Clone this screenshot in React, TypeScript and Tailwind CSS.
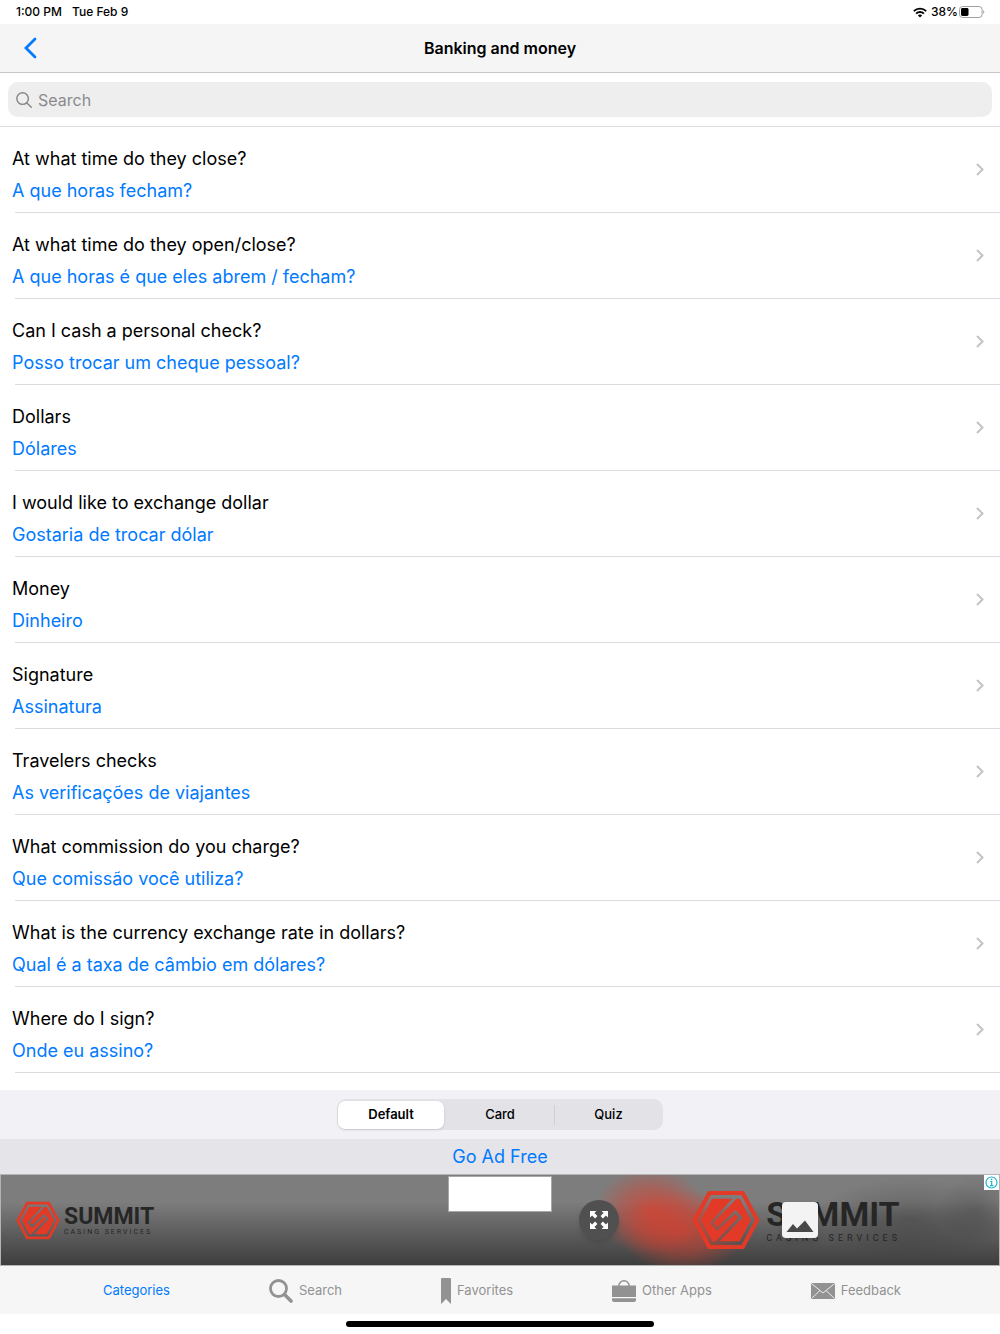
import React, { useId, useState } from 'react'

interface Phrase {
  source: string
  translation: string
}

const phrases: Phrase[] = [
  { source: 'At what time do they close?', translation: 'A que horas fecham?' },
  {
    source: 'At what time do they open/close?',
    translation: 'A que horas é que eles abrem / fecham?'
  },
  {
    source: 'Can I cash a personal check?',
    translation: 'Posso trocar um cheque pessoal?'
  },
  { source: 'Dollars', translation: 'Dólares' },
  {
    source: 'I would like to exchange dollar',
    translation: 'Gostaria de trocar dólar'
  },
  { source: 'Money', translation: 'Dinheiro' },
  { source: 'Signature', translation: 'Assinatura' },
  { source: 'Travelers checks', translation: 'As verificações de viajantes' },
  {
    source: 'What commission do you charge?',
    translation: 'Que comissão você utiliza?'
  },
  {
    source: 'What is the currency exchange rate in dollars?',
    translation: 'Qual é a taxa de câmbio em dólares?'
  },
  { source: 'Where do I sign?', translation: 'Onde eu assino?' }
]

const modes = ['Default', 'Card', 'Quiz']

const WifiIcon = () => (
  <svg viewBox="0 0 14 11" className="h-[11px] w-[14px]" aria-hidden="true">
    <g fill="none" stroke="#000" strokeWidth="1.8">
      <path d="M0.8 4.2a8.8 8.8 0 0 1 12.4 0" />
      <path d="M3.1 6.6a5.5 5.5 0 0 1 7.8 0" />
    </g>
    <path d="M7 10.6 4.9 8.5a3 3 0 0 1 4.2 0z" />
  </svg>
)

const BatteryIcon = () => (
  <svg viewBox="0 0 26 12" className="h-3 w-[26px]" aria-hidden="true">
    <rect
      x="0.5"
      y="0.5"
      width="22.6"
      height="11"
      rx="3"
      fill="none"
      stroke="#a0a0a0"
    />
    <rect x="2" y="2" width="7.5" height="8" rx="1.4" />
    <path d="M24.2 4.2v3.6c.7-.3 1.1-1 1.1-1.8s-.4-1.5-1.1-1.8z" fill="#a0a0a0" />
  </svg>
)

const StatusBar = () => (
  <div className="flex h-6 items-center justify-between pl-4 pr-[15px] text-xs font-medium">
    <div className="flex gap-[10px]">
      <span>1:00 PM</span>
      <span>Tue Feb 9</span>
    </div>
    <div className="flex items-center">
      <WifiIcon />
      <span className="ml-1 mr-px">38%</span>
      <BatteryIcon />
    </div>
  </div>
)

const NavBar = () => (
  <header className="grid h-[49px] grid-cols-[1fr_auto_1fr] items-center border-b border-[#c8c8ca] bg-[#f5f5f5]">
    <button type="button" aria-label="Back" className="ml-6 w-4">
      <svg viewBox="0 0 13 22" className="h-[22px] w-[13px]">
        <path
          d="M11 2 2 11l9 9"
          fill="none"
          stroke="#007aff"
          strokeWidth="2.8"
          strokeLinecap="round"
        />
      </svg>
    </button>
    <h1 className="text-base font-semibold">Banking and money</h1>
  </header>
)

const SearchField = () => (
  <div className="border-b border-[#dcdcde] px-2 py-[9px]">
    <label className="flex h-[35px] items-center gap-[6px] rounded-[10px] bg-[#eeeeee] px-2">
      <svg viewBox="0 0 16 16" className="size-4" aria-hidden="true">
        <g fill="none" stroke="#85858a" strokeWidth="1.4" strokeLinecap="round">
          <circle cx="6.6" cy="6.6" r="5.8" />
          <path d="m10.900 10.900 4.400 4.400" />
        </g>
      </svg>
      <input
        type="search"
        aria-label="Search"
        placeholder="Search"
        className="min-w-0 flex-1 bg-transparent text-base outline-none placeholder:text-[#8a8a8e]"
      />
    </label>
  </div>
)

const PhraseRow: React.FC<{ phrase: Phrase }> = ({ phrase }) => (
  <li>
    <button
      type="button"
      className="flex w-full items-center justify-between pl-3 pr-4 text-left"
    >
      <span className="flex flex-col pb-[5px] pt-4 text-lg leading-8">
        <span>{phrase.source}</span>
        <span className="text-[#007aff]">{phrase.translation}</span>
      </span>
      <svg viewBox="0 0 8 13" className="h-[13px] w-2" aria-hidden="true">
        <path d="m1 1 5.5 5.5L1 12" fill="none" stroke="#c4c4c7" strokeWidth="2" />
      </svg>
    </button>
    <div className="ml-[15px] h-px bg-[#dcdcde]" />
  </li>
)

const ModeSwitch = () => {
  const [mode, setMode] = useState('Default')

  return (
    <div className="flex h-[49px] items-center justify-center bg-[#f2f1f6]">
      <div className="grid h-[31px] w-[326px] grid-cols-3 rounded-[9px] bg-[#e3e2e7] px-px py-[2px] text-[13px]">
        {modes.map(item => (
          <button
            key={item}
            type="button"
            aria-pressed={item === mode}
            onClick={() => setMode(item)}
            className={
              item === mode
                ? 'mr-[2px] rounded-[7px] bg-white font-semibold shadow'
                : 'my-1 border-[#cfced4] font-medium last:border-l'
            }
          >
            {item}
          </button>
        ))}
      </div>
    </div>
  )
}

const SummitMark: React.FC<{ className: string }> = ({ className }) => {
  const maskId = useId()

  return (
    <svg viewBox="0 0 68 60" className={className} aria-hidden="true">
      <mask id={maskId}>
        <rect width="68" height="60" fill="#fff" />
        <path
          d="M46 5 19.500 33l5.500 6L43.500 22l5 5.500L22 55"
          fill="none"
          stroke="#000"
          strokeWidth="3"
        />
      </mask>
      <path
        d="M2.800 30 17.300 3h33.400l14.500 27-14.500 27H17.300z"
        fill="none"
        stroke="#e33a27"
        strokeWidth="4.200"
      />
      <path
        d="M9 30 20.200 8.800h27.600L59 30 47.800 51.200H20.200z"
        fill="#e33a27"
        mask={`url(#${maskId})`}
      />
    </svg>
  )
}

const AdBanner = () => (
  <section
    aria-label="Advertisement"
    className="relative flex h-[92px] items-center justify-between overflow-hidden border border-[#b4b4b4] bg-linear-to-b from-[#7d7d7d] from-30% to-[#3e3e3e] font-['Roboto',sans-serif] text-[#262626]"
  >
    <div className="flex items-center gap-1 pl-[15px]">
      <SummitMark className="h-[39px] w-11" />
      <div>
        <p className="text-[23px] font-bold leading-6">SUMMIT</p>
        <p className="text-[7px] leading-[6px] tracking-[2px]">CASING SERVICES</p>
      </div>
    </div>

    <div className="absolute right-[24%] top-0 h-full w-[200px] bg-[radial-gradient(ellipse_56px_44px_at_46%_40%,#dc3e2cb8_0%,#dc3e2c70_50%,transparent_100%),radial-gradient(ellipse_64px_42px_at_62%_62%,#dc3e2cb8_0%,#dc3e2c70_50%,transparent_100%)]" />
    <div className="absolute right-0 top-0 h-full w-[220px] bg-[radial-gradient(ellipse_40px_34px_at_90%_38%,#00000028_0%,transparent_100%),radial-gradient(ellipse_100px_40px_at_60%_48%,#00000038_0%,transparent_100%)]" />

    <div className="relative flex items-center gap-[6px] pr-[98px]">
      <button
        type="button"
        aria-label="Expand"
        className="mr-[67px] flex size-10 items-center justify-center rounded-full bg-[#505050] shadow-md"
      >
        <svg viewBox="0 0 18 18" className="size-[18px]">
          <g fill="#fff">
            <path d="M0 0h6.500L4.400 2.100 7.400 5.100 5.100 7.400 2.100 4.400 0 6.500z" />
            <path d="M18 0v6.500l-2.100-2.100-3 3-2.300-2.300 3-3L11.500 0z" />
            <path d="M0 18v-6.500l2.100 2.100 3-3 2.300 2.300-3 3L6.500 18z" />
            <path d="M18 18h-6.500l2.100-2.100-3-3 2.300-2.300 3 3 2.100-2.100z" />
          </g>
        </svg>
      </button>
      <SummitMark className="h-[60px] w-[68px]" />
      <div className="relative pb-1">
        <p className="text-[34px] font-bold leading-10">SUMMIT</p>
        <p className="text-[9px] leading-2 tracking-[4px]">CASING SERVICES</p>
        <svg
          viewBox="0 0 36 36"
          className="absolute left-4 top-2 size-9 drop-shadow-md"
          aria-hidden="true"
        >
          <rect width="36" height="36" rx="4" fill="#f3f3f3" />
          <path d="M4.500 30 11 22l4 4.500 8-8L31.500 30z" fill="#484848" />
        </svg>
      </div>
    </div>

    <div className="absolute left-1/2 top-px h-9 w-[104px] -translate-x-1/2 border border-[#a8a8a8] bg-white" />
    <a
      href="#adchoices"
      aria-label="AdChoices"
      className="absolute right-0 top-0 bg-white p-px"
    >
      <svg viewBox="0 0 13 13" className="size-[13px]">
        <circle cx="6.5" cy="6.5" r="5.5" fill="none" stroke="#1fb5d0" strokeWidth="1.2" />
        <path d="M5.200 5.500h1.500v4M5 9.600h3.400" fill="none" stroke="#1fb5d0" strokeWidth="1.2" />
        <circle cx="6.5" cy="3.3" r="0.9" fill="#1fb5d0" />
      </svg>
    </a>
  </section>
)

const TabBar = () => (
  <nav className="flex h-12 items-center justify-evenly bg-[#f6f6f6] pl-1 pt-[2px] text-[13px] text-[#929292]">
    <a href="#categories" aria-current="page" className="text-[#007aff]">
      Categories
    </a>
    <a href="#search" className="flex items-center gap-[6px]">
      <svg viewBox="0 0 24 24" className="size-6" aria-hidden="true">
        <g fill="none" stroke="currentColor" strokeLinecap="round">
          <circle cx="9.5" cy="9.5" r="8" strokeWidth="2.8" />
          <path d="m15.500 15.500 6.500 6.500" strokeWidth="3.6" />
        </g>
      </svg>
      Search
    </a>
    <a href="#favorites" className="flex items-center gap-[6px]">
      <svg viewBox="0 0 10 26" className="h-[26px] w-[10px]" aria-hidden="true">
        <path d="M0 1q0-1 1-1h8q1 0 1 1v25l-5-5-5 5z" fill="currentColor" />
      </svg>
      Favorites
    </a>
    <a href="#other-apps" className="flex items-center gap-[6px]">
      <svg viewBox="0 0 24 22" className="h-[22px] w-6" aria-hidden="true">
        <path
          d="M6.800 6.500V6a5.200 5.200 0 0 1 10.400 0v.5"
          fill="none"
          stroke="currentColor"
          strokeWidth="1.5"
        />
        <path
          d="M0 5.500h24V17H0zM0 18.200h24V20q0 2-2 2H2q-2 0-2-2z"
          fill="currentColor"
        />
      </svg>
      Other Apps
    </a>
    <a href="#feedback" className="flex items-center gap-[6px]">
      <svg viewBox="0 0 24 16" className="h-4 w-6" aria-hidden="true">
        <rect width="24" height="16" rx="1.5" fill="currentColor" />
        <path
          d="m1 1 11 9L23 1M1 15l8-7.500M23 15l-8-7.500"
          fill="none"
          stroke="#f6f6f6"
          strokeWidth="0.9"
        />
      </svg>
      Feedback
    </a>
  </nav>
)

export default function App() {
  return (
    <div className="flex min-h-screen flex-col bg-white font-['Inter',sans-serif] text-black">
      <StatusBar />
      <NavBar />
      <SearchField />
      <main className="flex-1">
        <ul>
          {phrases.map(phrase => (
            <PhraseRow key={phrase.source} phrase={phrase} />
          ))}
        </ul>
      </main>
      <ModeSwitch />
      <a
        href="#ad-free"
        className="bg-[#e5e4e9] text-center text-lg leading-[35px] text-[#007aff]"
      >
        Go Ad Free
      </a>
      <AdBanner />
      <TabBar />
      <div className="flex h-5 items-center justify-center">
        <div className="h-[6px] w-[308px] rounded-full bg-black" />
      </div>
    </div>
  )
}
